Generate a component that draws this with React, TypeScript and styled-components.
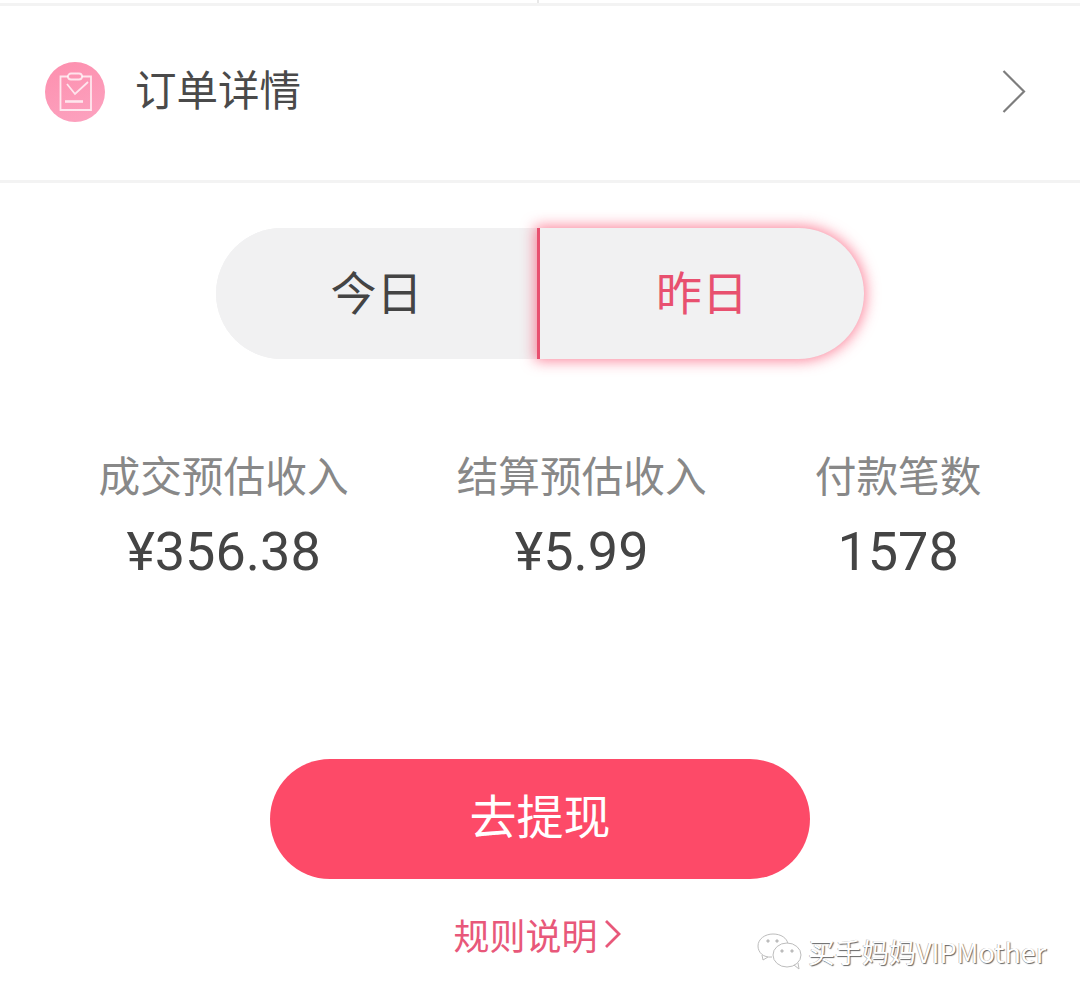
import React, { useState } from "react";
import styled, { createGlobalStyle } from "styled-components";

const CJK = `"Noto Sans CJK SC", Roboto, sans-serif`;

const tabs = ["今日", "昨日"];

const stats = [
  { label: "成交预估收入", value: "¥356.38" },
  { label: "结算预估收入", value: "¥5.99" },
  { label: "付款笔数", value: "1578" },
];

const App: React.FC = () => {
  const [activeTab, setActiveTab] = useState(1);

  return (
    <Page>
      <GlobalStyle />
      <TopRule>
        <TopTick />
      </TopRule>

      <OrderRow>
        <OrderIcon>
          <svg width="36" height="42" viewBox="0 0 36 42" fill="none" stroke="#fff" strokeOpacity="0.75" strokeWidth="1.8">
            <path d="M11 5.5H3.5V39H34V5.5H25" />
            <rect x="11" y="2.5" width="14" height="6" rx="3" />
            <path d="M10 13L18 23L31 11" />
            <path d="M8 30.5H26" strokeWidth="2.6" />
          </svg>
        </OrderIcon>
        <OrderTitle>订单详情</OrderTitle>
        <Chevron width="26" height="44" viewBox="0 0 26 44">
          <path d="M2.5 2L23 22.5L2.5 43" />
        </Chevron>
      </OrderRow>

      <Toggle>
        {tabs.map((tab, index) => (
          <ToggleTab key={tab} $active={activeTab === index} onClick={() => setActiveTab(index)}>
            {tab}
          </ToggleTab>
        ))}
      </Toggle>

      <Stats>
        {stats.map((stat) => (
          <Stat key={stat.label}>
            <StatLabel>{stat.label}</StatLabel>
            <StatValue>{stat.value}</StatValue>
          </Stat>
        ))}
      </Stats>

      <Withdraw>去提现</Withdraw>

      <RulesLink>
        规则说明
        <svg width="17" height="30" viewBox="0 0 17 30" fill="none" stroke="#e8587a" strokeWidth="2.8">
          <path d="M2 2L15 15L2 28" />
        </svg>
      </RulesLink>

      <Watermark>
        <svg width="46" height="38" viewBox="0 0 46 38" fill="none" stroke="#bdbdbd" strokeWidth="1">
          <path d="M15 24C6 25 1 19 1 13C1 6 8 1 16 1C24 1 30 5 31 11" />
          <path d="M5 22L6 27L11 24" />
          <ellipse cx="30" cy="22" rx="14" ry="12" fill="#fff" />
          <path d="M37 32L42 36L41 30" />
          <circle cx="11" cy="8" r="1.2" fill="#bbb" />
          <circle cx="20" cy="8" r="1.2" fill="#bbb" />
          <circle cx="25" cy="18" r="1.2" fill="#bbb" />
          <circle cx="35" cy="18" r="1.2" fill="#bbb" />
        </svg>
        <WatermarkText>买手妈妈VIPMother</WatermarkText>
      </Watermark>
    </Page>
  );
};

export default App;

const GlobalStyle = createGlobalStyle`
  html, body {
    margin: 0;
    padding: 0;
    background: #fff;
  }
`;

const Page = styled.div`
  position: relative;
  display: flex;
  flex-direction: column;
  align-items: center;
  width: 1080px;
  height: 1002px;
  overflow: hidden;
  background: #fff;
  font-family: ${CJK};
`;

const TopRule = styled.div`
  position: relative;
  align-self: stretch;
  height: 3px;
  margin-top: 3px;
  background: #f3f3f3;
`;

const TopTick = styled.div`
  position: absolute;
  left: 537px;
  top: -3px;
  width: 2px;
  height: 3px;
  background: #e8e8e8;
`;

const OrderRow = styled.div`
  align-self: stretch;
  display: flex;
  align-items: center;
  box-sizing: border-box;
  height: 177px;
  padding: 0 53px 2px 45px;
  border-bottom: 3px solid #f3f3f3;
`;

const OrderIcon = styled.div`
  display: flex;
  align-items: center;
  justify-content: center;
  width: 60px;
  height: 60px;
  border-radius: 50%;
  background: linear-gradient(160deg, #fd8fae, #fca3c0);
`;

const OrderTitle = styled.div`
  flex: 1;
  margin-left: 30px;
  margin-bottom: 9px;
  font-size: 41.5px;
  line-height: 56px;
  color: #4a4a4a;
`;

const Chevron = styled.svg`
  margin-bottom: 2px;
  fill: none;
  stroke: #7d7d7d;
  stroke-width: 2.2;
`;

const Toggle = styled.div`
  display: flex;
  width: 648px;
  height: 131px;
  margin-top: 45px;
  border-radius: 66px;
  background: #f1f1f2;
`;

const ToggleTab = styled.div<{ $active: boolean }>`
  flex: ${({ $active }) => ($active ? "0 0 327px" : "0 0 321px")};
  box-sizing: border-box;
  display: flex;
  align-items: center;
  justify-content: center;
  padding-bottom: 8px;
  font-size: 46px;
  border-radius: ${({ $active }) => ($active ? "0 66px 66px 0" : "66px 0 0 66px")};
  border-left: ${({ $active }) => ($active ? "3px solid #e8506f" : "none")};
  box-shadow: ${({ $active }) => ($active ? "0 0 14px 2px rgba(250, 70, 105, 0.65)" : "none")};
  color: ${({ $active }) => ($active ? "#e8506f" : "#444")};
  background: #f1f1f2;
  cursor: pointer;
`;

const Stats = styled.div`
  display: flex;
  justify-content: center;
  gap: 108px;
  margin-top: 85px;
`;

const Stat = styled.div`
  display: flex;
  flex-direction: column;
  align-items: center;
`;

const StatLabel = styled.div`
  font-size: 41.7px;
  line-height: 60px;
  color: #888;
`;

const StatValue = styled.div`
  margin-top: 17px;
  font-family: Roboto, sans-serif;
  font-size: 54px;
  line-height: 62px;
  color: #444;
`;

const Withdraw = styled.button`
  display: block;
  width: 540px;
  height: 120px;
  margin-top: 176px;
  padding: 0 0 12px;
  border: none;
  border-radius: 60px;
  background: #fd4a68;
  color: #fff;
  font-family: ${CJK};
  font-size: 47px;
`;

const RulesLink = styled.div`
  display: flex;
  align-items: center;
  gap: 6px;
  margin-top: 26px;
  margin-right: 6px;
  font-size: 36px;
  line-height: 58px;
  color: #e8587a;
`;

const Watermark = styled.div`
  position: absolute;
  left: 757px;
  top: 932px;
  display: flex;
  align-items: center;
  gap: 5px;
`;

const WatermarkText = styled.span`
  font-size: 27px;
  line-height: 40px;
  color: #fff;
  text-shadow: 1px 1px 1px #666, -0.5px -0.5px 0 #aaa;
`;
